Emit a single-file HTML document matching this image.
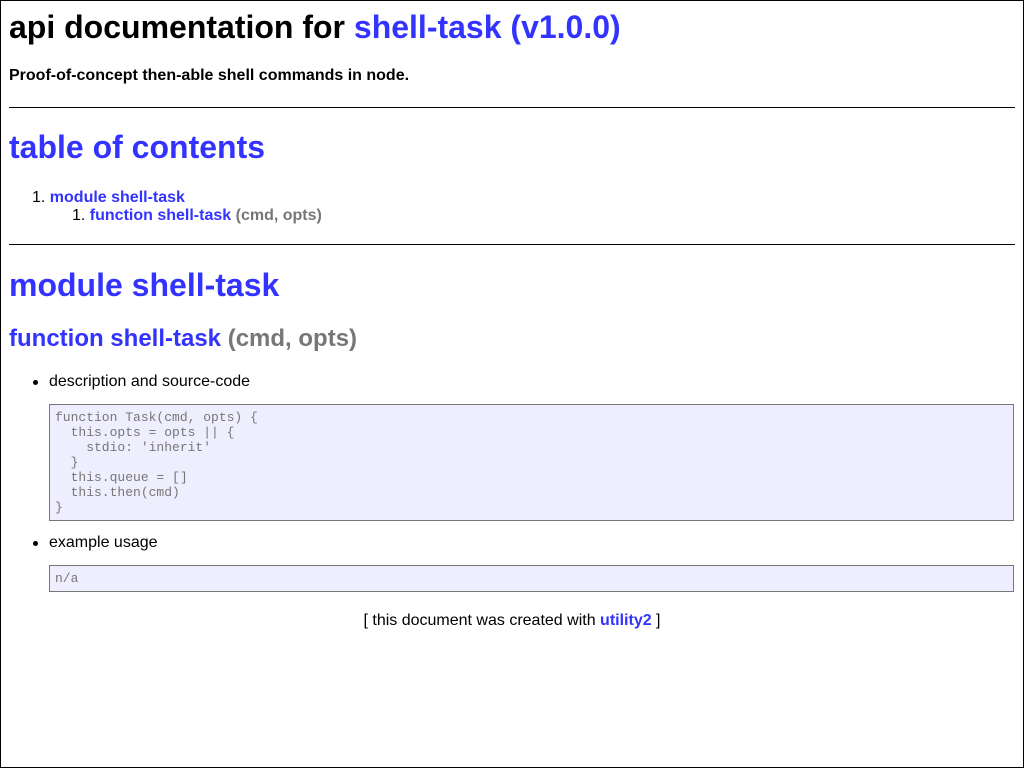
<!DOCTYPE html>
<html><head><style>
html,body{margin:0;padding:0}
body{width:1022px;height:766px;border:1px solid #000;position:relative;font-family:"Liberation Sans",sans-serif;overflow:hidden;background:#fff}
.a{position:absolute;white-space:nowrap}
.b{color:#33f;font-weight:bold}
.g{color:#777;font-weight:bold}
hr{position:absolute;left:8px;width:1006px;margin:0;border:0;border-top:1px solid #000;height:0}
pre{position:absolute;left:48px;width:955px;margin:0;padding:5px 3px 5px 5px;background:#eef;border:1px solid #777;color:#777;font:13px/15px "Liberation Mono",monospace}
.dot{position:absolute;width:5px;height:5px;border-radius:50%;background:#000}
</style></head><body>
<div class="a" style="left:8px;top:6px;font-size:32px;font-weight:bold;line-height:40px">api documentation for <span class="b">shell-task (v1.0.0)</span></div>
<div class="a" style="left:8px;top:66px;font-size:16px;font-weight:bold;line-height:18px">Proof-of-concept then-able shell commands in node.</div>
<hr style="top:106px">
<div class="a b" style="left:8px;top:126px;font-size:32px;line-height:40px">table of contents</div>
<div class="a" style="left:31px;top:188px;font-size:16px;line-height:18px">1. <span class="b">module shell-task</span></div>
<div class="a" style="left:71px;top:206px;font-size:16px;line-height:18px">1. <span class="b">function shell-task</span> <span class="g">(cmd, opts)</span></div>
<hr style="top:243px">
<div class="a b" style="left:8px;top:264px;font-size:32px;line-height:40px">module shell-task</div>
<div class="a" style="left:8px;top:323px;font-size:24px;line-height:30px"><span class="b">function shell-task</span> <span class="g">(cmd, opts)</span></div>
<div class="dot" style="left:32px;top:379px"></div>
<div class="a" style="left:48px;top:372px;font-size:16px;line-height:18px">description and source-code</div>
<pre style="top:403px">function Task(cmd, opts) {
  this.opts = opts || {
    stdio: 'inherit'
  }
  this.queue = []
  this.then(cmd)
}</pre>
<div class="dot" style="left:32px;top:540px"></div>
<div class="a" style="left:48px;top:533px;font-size:16px;line-height:18px">example usage</div>
<pre style="top:564px;height:17px;padding-top:5px;padding-bottom:3px">n/a</pre>
<div class="a" style="left:0;width:1022px;text-align:center;top:611px;font-size:16px;line-height:18px">[ this document was created with <span class="b">utility2</span> ]</div>
</body></html>
